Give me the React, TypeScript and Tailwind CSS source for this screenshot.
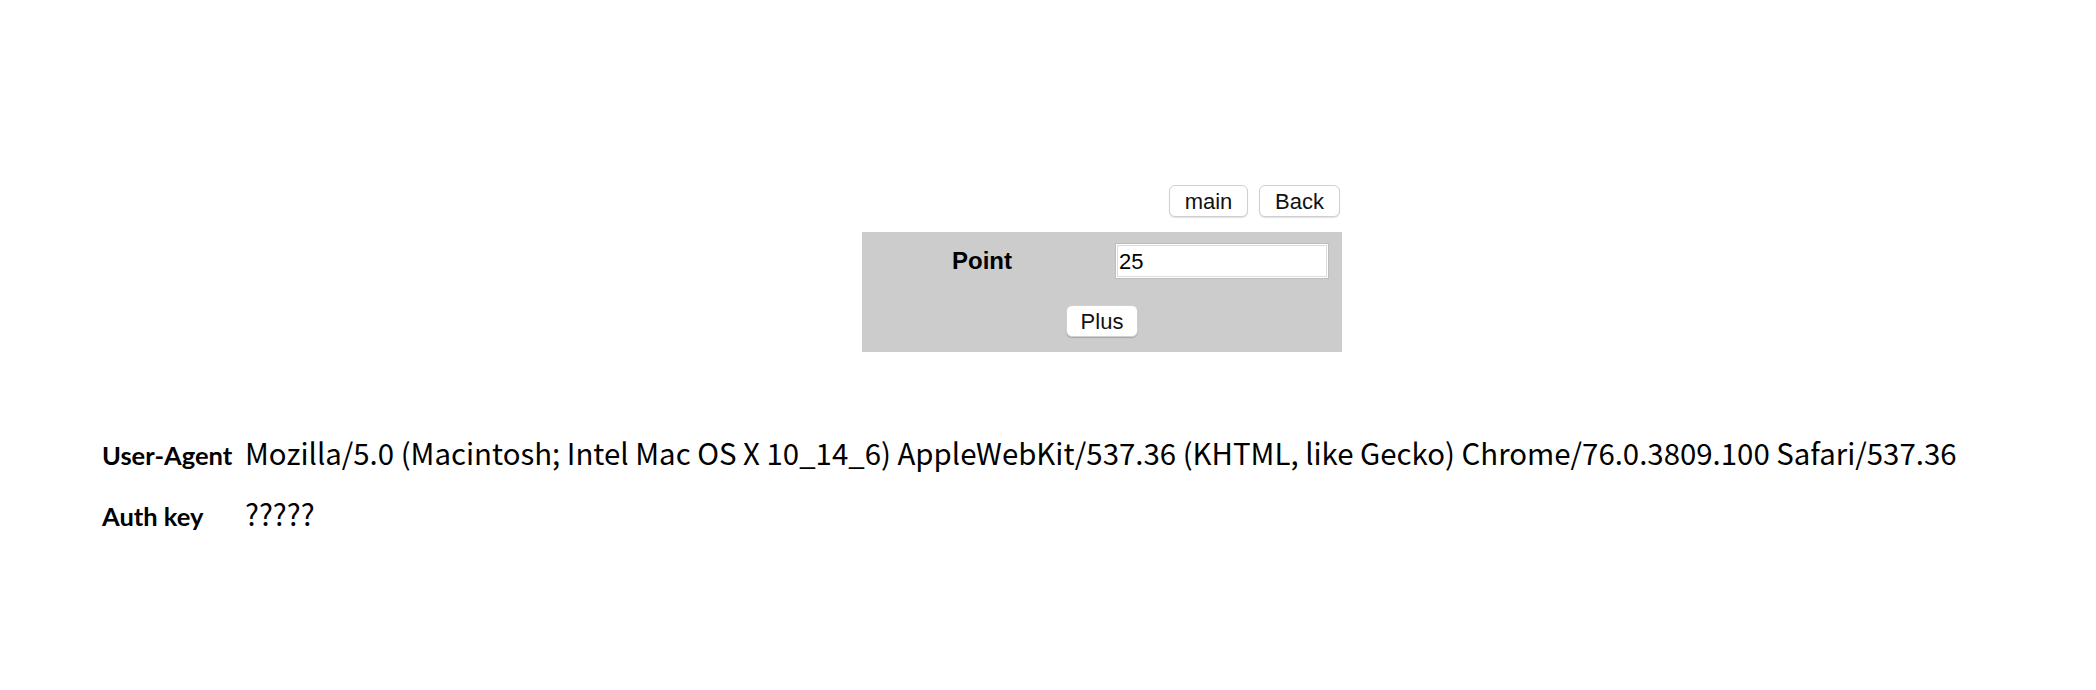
export default function App() {
  return (
    <div className="w-[2096px] h-[690px] bg-white text-black overflow-hidden">
      {/* top buttons + point panel */}
      <div className="ml-[862px] w-[480px] pt-[185px]">
        <div className="flex justify-end gap-[11px] pr-[2px]">
          <button className="h-[32px] w-[79px] rounded-[6px] border border-[#d0d0d0] bg-white pt-[2px] text-[22px] leading-none text-[#111] shadow-[0_1px_1px_rgba(0,0,0,0.12)] [font-family:'Liberation_Sans',Arial,sans-serif]">
            main
          </button>
          <button className="h-[32px] w-[81px] rounded-[6px] border border-[#d0d0d0] bg-white pt-[2px] text-[22px] leading-none text-[#111] shadow-[0_1px_1px_rgba(0,0,0,0.12)] [font-family:'Liberation_Sans',Arial,sans-serif]">
            Back
          </button>
        </div>

        <div className="mt-[15px] h-[120px] bg-[#cccccc] pt-[11px]">
          <div className="grid grid-cols-2 items-center">
            <div className="text-center text-[24px] font-bold leading-none [font-family:'Liberation_Sans',Arial,sans-serif]">
              Point
            </div>
            <div className="flex justify-center">
              <input
                defaultValue="25"
                className="h-[36px] w-[214px] border border-[#bdbdbd] bg-white px-[3px] pt-[2px] text-[22px] text-black outline-none shadow-[inset_0_0_0_1px_#ffffff,inset_0_0_0_2px_#dcdcdc] [font-family:'Liberation_Sans',Arial,sans-serif]"
              />
            </div>
          </div>
          <div className="mt-[26px] flex justify-center">
            <button className="h-[32px] w-[72px] rounded-[6px] border border-[#d0d0d0] bg-white pt-[2px] text-[22px] leading-none text-[#111] shadow-[0_1px_1px_rgba(0,0,0,0.18)] [font-family:'Liberation_Sans',Arial,sans-serif]">
              Plus
            </button>
          </div>
        </div>
      </div>

      {/* request info */}
      <div className="ml-[102px] mt-[78px] flex flex-col gap-[17px]">
        <div className="flex items-baseline">
          <div className="w-[143px] shrink-0 text-[25.5px] font-bold [font-family:Lato,sans-serif]">User-Agent</div>
          <div className="whitespace-nowrap text-[29.4px] [font-family:'Noto_Sans_CJK_KR',sans-serif]">
            Mozilla/5.0 (Macintosh; Intel Mac OS X 10_14_6) AppleWebKit/537.36 (KHTML, like Gecko) Chrome/76.0.3809.100 Safari/537.36
          </div>
        </div>
        <div className="flex items-baseline">
          <div className="w-[143px] shrink-0 text-[25.5px] font-bold [font-family:Lato,sans-serif]">Auth key</div>
          <div className="whitespace-nowrap text-[29.4px] [font-family:'Noto_Sans_CJK_KR',sans-serif]">?????</div>
        </div>
      </div>
    </div>
  );
}
